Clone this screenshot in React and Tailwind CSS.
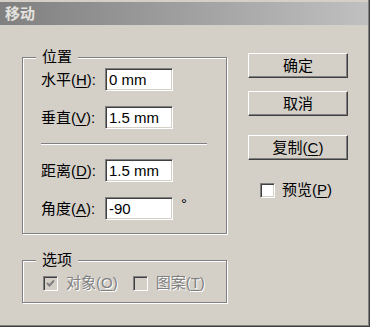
import React from "react";

const font = "font-['Liberation_Sans','Noto_Sans_CJK_SC',sans-serif]";

function Field({ label, k, value, deg }) {
  const [a, b] = label;
  return (
    <div className="flex h-[23px] items-center">
      <div className="w-[64px] text-[15px] leading-[18px] text-black whitespace-nowrap">
        {a}(<u className="underline-offset-[2px]">{k}</u>):
      </div>
      <div className="h-[23px] w-[68px] border border-t-[#808080] border-l-[#808080] border-b-white border-r-white bg-white shadow-[inset_1px_1px_0_#404040,inset_-1px_-1px_0_#d4d0c8] pl-[3px] flex items-center text-[15px] leading-[18px] text-black">
        {value}
      </div>
      {deg && <div className="ml-[8px] self-start -mt-[2px] text-[15px] leading-[18px] text-black">°</div>}
    </div>
  );
}

function Btn({ children }) {
  return (
    <div className="h-[25px] w-[100px] border border-t-white border-l-white border-r-[#404040] border-b-[#404040] shadow-[inset_-1px_-1px_0_#808080] flex items-center justify-center text-[15px] leading-[18px] text-black">
      {children}
    </div>
  );
}

function Check({ checked, disabled }) {
  return (
    <div
      className={`h-[15px] w-[15px] border border-t-[#808080] border-l-[#808080] border-b-white border-r-white shadow-[inset_1px_1px_0_#404040,inset_-1px_-1px_0_#d4d0c8] flex items-center justify-center ${disabled ? "bg-[#d4d0c8]" : "bg-white"}`}
    >
      {checked && (
        <svg width="9" height="9" viewBox="0 0 9 9">
          <path d="M1 4 L3.5 6.5 L8 1.5" stroke={disabled ? "#808080" : "#000"} strokeWidth="2" fill="none" />
        </svg>
      )}
    </div>
  );
}

function Group({ title, className, children }) {
  return (
    <div className={`relative w-[205px] border border-[#808080] shadow-[1px_1px_0_#fff,inset_1px_1px_0_#fff] ${className}`}>
      <div className="absolute -top-[10px] left-[13px] bg-[#d4d0c8] px-[6px] text-[15px] leading-[18px] text-black">
        {title}
      </div>
      {children}
    </div>
  );
}

export default function App() {
  return (
    <div className={`${font} w-[370px] h-[327px] bg-[#d4d0c8] pt-[2px] flex flex-col shadow-[inset_-1px_-1px_0_#404040,inset_-2px_-2px_0_#808080] overflow-hidden`}>
      <div className="h-[23px] mr-[2px] bg-gradient-to-r from-[#808080] to-[#c0c0c0] flex items-center pl-[5px]">
        <span className="text-[15px] leading-[18px] font-bold text-[#e4e2de]">移动</span>
      </div>
      <div className="flex pl-[22px]">
        <div className="flex flex-col">
          <Group title="位置" className="mt-[32px] h-[177px] pt-[10px] pl-[18px]">
            <Field label={["水平"]} k="H" value="0 mm" />
            <div className="mt-[15px]"><Field label={["垂直"]} k="V" value="1.5 mm" /></div>
            <div className="mt-[14px] w-[166px] h-[2px] border-t border-t-[#808080] border-b border-b-white" />
            <div className="mt-[14px]"><Field label={["距离"]} k="D" value="1.5 mm" /></div>
            <div className="mt-[15px]"><Field label={["角度"]} k="A" value="-90" deg /></div>
          </Group>
          <Group title="选项" className="mt-[26px] h-[43px] pt-[13px] pl-[20px]">
            <div className="flex items-center text-[15px] leading-[18px] text-[#808080] [text-shadow:1px_1px_0_#fff]">
              <Check checked disabled />
              <span className="ml-[8px]">对象(<u className="underline-offset-[2px]">O</u>)</span>
              <div className="ml-[15px]"><Check disabled /></div>
              <span className="ml-[8px]">图案(<u className="underline-offset-[2px]">T</u>)</span>
            </div>
          </Group>
        </div>
        <div className="ml-[21px] mt-[28px] flex flex-col">
          <Btn>确定</Btn>
          <div className="mt-[13px]"><Btn>取消</Btn></div>
          <div className="mt-[19px]"><Btn>复制(<u className="underline-offset-[2px]">C</u>)</Btn></div>
          <div className="mt-[21px] ml-[12px] flex items-center text-[15px] leading-[18px] text-black">
            <Check />
            <span className="ml-[7px]">预览(<u className="underline-offset-[2px]">P</u>)</span>
          </div>
        </div>
      </div>
    </div>
  );
}
